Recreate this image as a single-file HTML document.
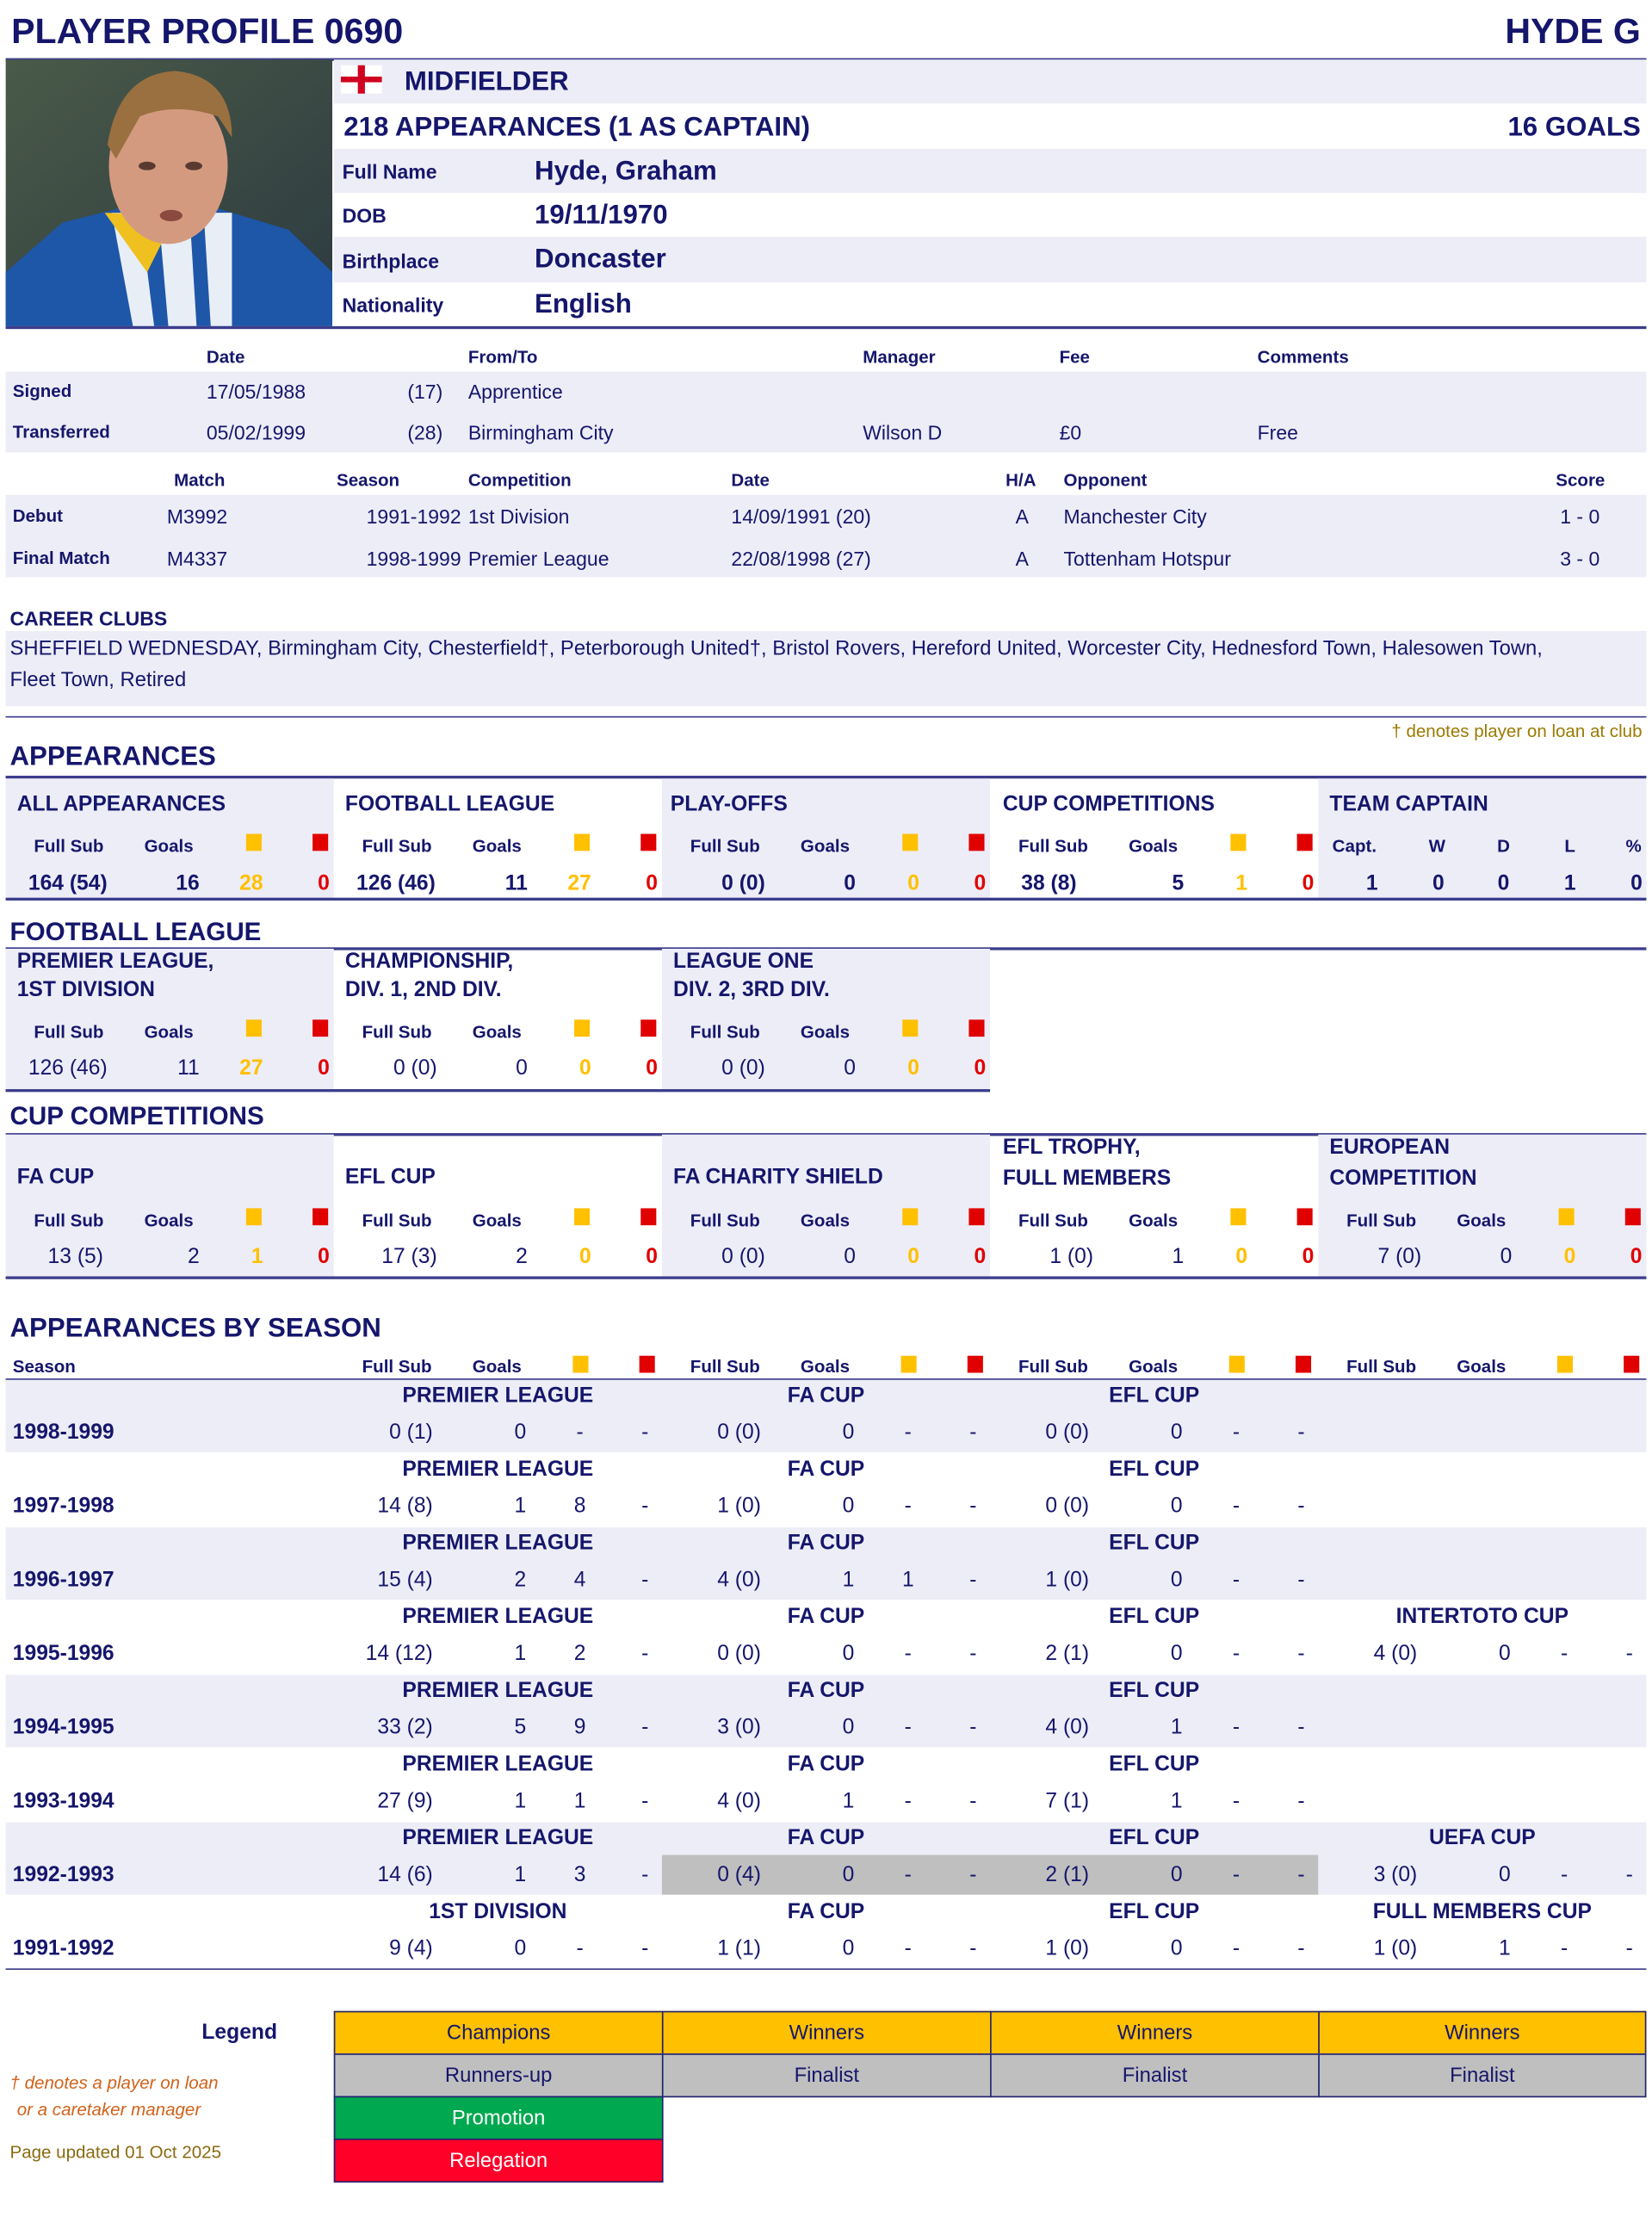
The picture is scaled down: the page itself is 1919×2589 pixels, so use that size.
<!DOCTYPE html>
<html><head><meta charset="utf-8">
<style>
html,body{margin:0;padding:0;background:#fff;}
body{width:1919px;height:2583px;overflow:hidden;}
#w{position:absolute;left:0;top:0;width:1168px;height:1572px;transform:scale(1.64298,1.6472);transform-origin:0 0;font-family:"Liberation Sans",Arial,sans-serif;color:#15166b;}
.a{position:absolute;white-space:nowrap;transform:translateY(-50%);line-height:1;font-size:14px;}
.r{transform:translate(-100%,-50%);}
.c{transform:translate(-50%,-50%);}
.b{font-weight:bold;}
.s{font-size:12.5px;font-weight:bold;}
.h{font-size:15px;font-weight:bold;}
.H{font-size:19px;font-weight:bold;}
.bx{position:absolute;}
.lv{background:#ededf7;}
.ln{position:absolute;left:4px;width:1160px;height:1.5px;background:#3c3c8c;}
.y{color:#ffc000;}.rd{color:#e00000;}
.sq{position:absolute;width:11px;height:12px;}
.sy{background:#ffc000;}.sr{background:#e00000;}
.lg{position:absolute;border:1px solid #23236e;box-sizing:border-box;display:flex;align-items:center;justify-content:center;font-size:14.5px;}
</style></head><body><div id="w">

<div class="a" style="left:8px;top:23px;font-size:25px;font-weight:bold">PLAYER PROFILE 0690</div>
<div class="a r" style="left:1160px;top:23px;font-size:25px;font-weight:bold">HYDE G</div>
<div class="ln" style="top:41px"></div>

<svg class="bx" style="left:4px;top:42px" width="231" height="188" viewBox="0 0 231 188">
<defs><linearGradient id="bg" x1="0" y1="0" x2="1" y2="1"><stop offset="0" stop-color="#4a5a48"/><stop offset="1" stop-color="#2c3a40"/></linearGradient></defs>
<rect width="231" height="188" fill="url(#bg)"/>
<path d="M0 150 L40 115 L80 105 L150 105 L200 120 L231 150 L231 188 L0 188Z" fill="#1e56a8"/>
<path d="M75 108 L90 188 L160 188 L160 108Z" fill="#e8eef5"/>
<path d="M95 108 L105 188 L115 188 L108 108Z" fill="#1e56a8"/>
<path d="M130 108 L135 188 L145 188 L140 108Z" fill="#1e56a8"/>
<path d="M70 108 L100 150 L120 110Z" fill="#f0c020"/>
<ellipse cx="115" cy="75" rx="42" ry="55" fill="#d49a80"/>
<path d="M72 60 Q80 10 120 8 Q160 12 160 55 L150 40 Q120 30 95 40 L78 70Z" fill="#9a7040"/>
<ellipse cx="100" cy="75" rx="6" ry="3" fill="#5a3a30"/><ellipse cx="133" cy="75" rx="6" ry="3" fill="#5a3a30"/>
<ellipse cx="117" cy="110" rx="8" ry="4" fill="#8a4a40"/>
</svg>

<div class="bx lv" style="left:236px;top:42px;width:928px;height:31px"></div>
<div class="bx lv" style="left:236px;top:105px;width:928px;height:31px"></div>
<div class="bx lv" style="left:236px;top:167px;width:928px;height:32px"></div>
<div class="bx" style="left:241px;top:46px;width:29px;height:20px;background:#fff"></div>
<div class="bx" style="left:253px;top:46px;width:5px;height:20px;background:#d00020"></div>
<div class="bx" style="left:241px;top:54px;width:29px;height:4px;background:#d00020"></div>
<div class="a H" style="left:286px;top:58px">MIDFIELDER</div>
<div class="a H" style="left:243px;top:90px">218 APPEARANCES (1 AS CAPTAIN)</div>
<div class="a H r" style="left:1160px;top:90px">16 GOALS</div>
<div class="a b" style="left:242px;top:121px;font-size:14px">Full Name</div><div class="a H" style="left:378px;top:121px">Hyde, Graham</div>
<div class="a b" style="left:242px;top:152px;font-size:14px">DOB</div><div class="a H" style="left:378px;top:152px">19/11/1970</div>
<div class="a b" style="left:242px;top:184px;font-size:14px">Birthplace</div><div class="a H" style="left:378px;top:183px">Doncaster</div>
<div class="a b" style="left:242px;top:215px;font-size:14px">Nationality</div><div class="a H" style="left:378px;top:215px">English</div>
<div class="ln" style="top:230px"></div>

<div class="a s" style="left:146px;top:252px">Date</div><div class="a s" style="left:331px;top:252px">From/To</div><div class="a s" style="left:610px;top:252px">Manager</div><div class="a s" style="left:749px;top:252px">Fee</div><div class="a s" style="left:889px;top:252px">Comments</div>
<div class="bx lv" style="left:4px;top:262px;width:1160px;height:57px"></div>
<div class="a s" style="left:9px;top:276px">Signed</div><div class="a" style="left:146px;top:276px">17/05/1988</div><div class="a r" style="left:313px;top:276px">(17)</div><div class="a" style="left:331px;top:276px">Apprentice</div>
<div class="a s" style="left:9px;top:305px">Transferred</div><div class="a" style="left:146px;top:305px">05/02/1999</div><div class="a r" style="left:313px;top:305px">(28)</div><div class="a" style="left:331px;top:305px">Birmingham City</div><div class="a" style="left:610px;top:305px">Wilson D</div><div class="a" style="left:749px;top:305px">£0</div><div class="a" style="left:889px;top:305px">Free</div>

<div class="a s" style="left:123px;top:339px">Match</div><div class="a s" style="left:238px;top:339px">Season</div><div class="a s" style="left:331px;top:339px">Competition</div><div class="a s" style="left:517px;top:339px">Date</div><div class="a s" style="left:711px;top:339px">H/A</div><div class="a s" style="left:752px;top:339px">Opponent</div><div class="a s" style="left:1100px;top:339px">Score</div>
<div class="bx lv" style="left:4px;top:349px;width:1160px;height:58px"></div>
<div class="a s" style="left:9px;top:364px">Debut</div><div class="a" style="left:118px;top:364px">M3992</div><div class="a r" style="left:326px;top:364px">1991-1992</div><div class="a" style="left:331px;top:364px">1st Division</div><div class="a" style="left:517px;top:364px">14/09/1991 (20)</div><div class="a" style="left:718px;top:364px">A</div><div class="a" style="left:752px;top:364px">Manchester City</div><div class="a" style="left:1103px;top:364px">1 - 0</div>
<div class="a s" style="left:9px;top:394px">Final Match</div><div class="a" style="left:118px;top:394px">M4337</div><div class="a r" style="left:326px;top:394px">1998-1999</div><div class="a" style="left:331px;top:394px">Premier League</div><div class="a" style="left:517px;top:394px">22/08/1998 (27)</div><div class="a" style="left:718px;top:394px">A</div><div class="a" style="left:752px;top:394px">Tottenham Hotspur</div><div class="a" style="left:1103px;top:394px">3 - 0</div>

<div class="a b" style="left:7px;top:436px;font-size:14px">CAREER CLUBS</div>
<div class="bx lv" style="left:4px;top:445px;width:1160px;height:53px"></div>
<div class="a" style="left:7px;top:458px;font-size:14.5px">SHEFFIELD WEDNESDAY, Birmingham City, Chesterfield†, Peterborough United†, Bristol Rovers, Hereford United, Worcester City, Hednesford Town, Halesowen Town,</div>
<div class="a" style="left:7px;top:480px;font-size:14.5px">Fleet Town, Retired</div>
<div class="ln" style="top:505px;height:1px"></div>
<div class="a r" style="left:1161px;top:516px;font-size:12.5px;color:#9a7a00">† denotes player on loan at club</div>

<div class="a" style="left:7px;top:534px;font-size:19px;font-weight:bold">APPEARANCES</div>
<div class="ln" style="top:547px;height:2px"></div>
<div class="bx lv" style="left:4px;top:549px;width:232px;height:84px"></div>
<div class="bx lv" style="left:468px;top:549px;width:232px;height:84px"></div>
<div class="bx lv" style="left:932px;top:549px;width:232px;height:84px"></div>
<div class="ln" style="top:633px"></div>

<div class="a h" style="left:12px;top:567px">ALL APPEARANCES</div>
<div class="a h" style="left:244px;top:567px">FOOTBALL LEAGUE</div>
<div class="a h" style="left:474px;top:567px">PLAY-OFFS</div>
<div class="a h" style="left:709px;top:567px">CUP COMPETITIONS</div>
<div class="a h" style="left:940px;top:567px">TEAM CAPTAIN</div>

<div class="a s" style="left:24px;top:597px">Full Sub</div><div class="a s" style="left:102px;top:597px">Goals</div><div class="sq sy" style="left:174px;top:588px"></div><div class="sq sr" style="left:221px;top:588px"></div>
<div class="a s" style="left:256px;top:597px">Full Sub</div><div class="a s" style="left:334px;top:597px">Goals</div><div class="sq sy" style="left:406px;top:588px"></div><div class="sq sr" style="left:453px;top:588px"></div>
<div class="a s" style="left:488px;top:597px">Full Sub</div><div class="a s" style="left:566px;top:597px">Goals</div><div class="sq sy" style="left:638px;top:588px"></div><div class="sq sr" style="left:685px;top:588px"></div>
<div class="a s" style="left:720px;top:597px">Full Sub</div><div class="a s" style="left:798px;top:597px">Goals</div><div class="sq sy" style="left:870px;top:588px"></div><div class="sq sr" style="left:917px;top:588px"></div>
<div class="a s" style="left:942px;top:597px">Capt.</div><div class="a s c" style="left:1016px;top:597px">W</div><div class="a s c" style="left:1063px;top:597px">D</div><div class="a s c" style="left:1110px;top:597px">L</div><div class="a s c" style="left:1155px;top:597px">%</div>

<div class="a b" style="left:20px;top:623px;font-size:15px">164 (54)</div><div class="a b r" style="left:141px;top:623px;font-size:15px">16</div><div class="a b r y" style="left:186px;top:623px;font-size:15px">28</div><div class="a b r rd" style="left:233px;top:623px;font-size:15px">0</div>
<div class="a b" style="left:252px;top:623px;font-size:15px">126 (46)</div><div class="a b r" style="left:373px;top:623px;font-size:15px">11</div><div class="a b r y" style="left:418px;top:623px;font-size:15px">27</div><div class="a b r rd" style="left:465px;top:623px;font-size:15px">0</div>
<div class="a b r" style="left:541px;top:623px;font-size:15px">0 (0)</div><div class="a b r" style="left:605px;top:623px;font-size:15px">0</div><div class="a b r y" style="left:650px;top:623px;font-size:15px">0</div><div class="a b r rd" style="left:697px;top:623px;font-size:15px">0</div>
<div class="a b" style="left:722px;top:623px;font-size:15px">38 (8)</div><div class="a b r" style="left:837px;top:623px;font-size:15px">5</div><div class="a b r y" style="left:882px;top:623px;font-size:15px">1</div><div class="a b r rd" style="left:929px;top:623px;font-size:15px">0</div>
<div class="a b c" style="left:970px;top:623px;font-size:15px">1</div><div class="a b c" style="left:1017px;top:623px;font-size:15px">0</div><div class="a b c" style="left:1063px;top:623px;font-size:15px">0</div><div class="a b c" style="left:1110px;top:623px;font-size:15px">1</div><div class="a b c" style="left:1157px;top:623px;font-size:15px">0</div>

<div class="a" style="left:7px;top:657px;font-size:18px;font-weight:bold">FOOTBALL LEAGUE</div>
<div class="ln" style="top:668px"></div>
<div class="bx lv" style="left:4px;top:669px;width:232px;height:99px"></div>
<div class="bx lv" style="left:468px;top:669px;width:232px;height:99px"></div>
<div class="bx" style="left:4px;top:768px;width:696px;height:1.5px;background:#3c3c8c"></div>
<div class="a h" style="left:12px;top:678px">PREMIER LEAGUE,</div><div class="a h" style="left:12px;top:698px">1ST DIVISION</div>
<div class="a h" style="left:244px;top:678px">CHAMPIONSHIP,</div><div class="a h" style="left:244px;top:698px">DIV. 1, 2ND DIV.</div>
<div class="a h" style="left:476px;top:678px">LEAGUE ONE</div><div class="a h" style="left:476px;top:698px">DIV. 2, 3RD DIV.</div>
<div class="a s" style="left:24px;top:728px">Full Sub</div><div class="a s" style="left:102px;top:728px">Goals</div><div class="sq sy" style="left:174px;top:719px"></div><div class="sq sr" style="left:221px;top:719px"></div>
<div class="a s" style="left:256px;top:728px">Full Sub</div><div class="a s" style="left:334px;top:728px">Goals</div><div class="sq sy" style="left:406px;top:719px"></div><div class="sq sr" style="left:453px;top:719px"></div>
<div class="a s" style="left:488px;top:728px">Full Sub</div><div class="a s" style="left:566px;top:728px">Goals</div><div class="sq sy" style="left:638px;top:719px"></div><div class="sq sr" style="left:685px;top:719px"></div>
<div class="a" style="left:20px;top:753px;font-size:15px">126 (46)</div><div class="a r" style="left:141px;top:753px;font-size:15px">11</div><div class="a b r y" style="left:186px;top:753px;font-size:15px">27</div><div class="a b r rd" style="left:233px;top:753px;font-size:15px">0</div>
<div class="a r" style="left:309px;top:753px;font-size:15px">0 (0)</div><div class="a r" style="left:373px;top:753px;font-size:15px">0</div><div class="a b r y" style="left:418px;top:753px;font-size:15px">0</div><div class="a b r rd" style="left:465px;top:753px;font-size:15px">0</div>
<div class="a r" style="left:541px;top:753px;font-size:15px">0 (0)</div><div class="a r" style="left:605px;top:753px;font-size:15px">0</div><div class="a b r y" style="left:650px;top:753px;font-size:15px">0</div><div class="a b r rd" style="left:697px;top:753px;font-size:15px">0</div>

<div class="a" style="left:7px;top:787px;font-size:18px;font-weight:bold">CUP COMPETITIONS</div>
<div class="ln" style="top:799px"></div>
<div class="bx lv" style="left:4px;top:800px;width:232px;height:100px"></div>
<div class="bx lv" style="left:468px;top:800px;width:232px;height:100px"></div>
<div class="bx lv" style="left:932px;top:800px;width:232px;height:100px"></div>
<div class="ln" style="top:900px"></div>
<div class="a h" style="left:12px;top:830px">FA CUP</div>
<div class="a h" style="left:244px;top:830px">EFL CUP</div>
<div class="a h" style="left:476px;top:830px">FA CHARITY SHIELD</div>
<div class="a h" style="left:709px;top:809px">EFL TROPHY,</div><div class="a h" style="left:709px;top:831px">FULL MEMBERS</div>
<div class="a h" style="left:940px;top:809px">EUROPEAN</div><div class="a h" style="left:940px;top:831px">COMPETITION</div>
<div class="a s" style="left:24px;top:861px">Full Sub</div><div class="a s" style="left:102px;top:861px">Goals</div><div class="sq sy" style="left:174px;top:852px"></div><div class="sq sr" style="left:221px;top:852px"></div>
<div class="a s" style="left:256px;top:861px">Full Sub</div><div class="a s" style="left:334px;top:861px">Goals</div><div class="sq sy" style="left:406px;top:852px"></div><div class="sq sr" style="left:453px;top:852px"></div>
<div class="a s" style="left:488px;top:861px">Full Sub</div><div class="a s" style="left:566px;top:861px">Goals</div><div class="sq sy" style="left:638px;top:852px"></div><div class="sq sr" style="left:685px;top:852px"></div>
<div class="a s" style="left:720px;top:861px">Full Sub</div><div class="a s" style="left:798px;top:861px">Goals</div><div class="sq sy" style="left:870px;top:852px"></div><div class="sq sr" style="left:917px;top:852px"></div>
<div class="a s" style="left:952px;top:861px">Full Sub</div><div class="a s" style="left:1030px;top:861px">Goals</div><div class="sq sy" style="left:1102px;top:852px"></div><div class="sq sr" style="left:1149px;top:852px"></div>
<div class="a r" style="left:73px;top:886px;font-size:15px">13 (5)</div><div class="a r" style="left:141px;top:886px;font-size:15px">2</div><div class="a b r y" style="left:186px;top:886px;font-size:15px">1</div><div class="a b r rd" style="left:233px;top:886px;font-size:15px">0</div>
<div class="a r" style="left:309px;top:886px;font-size:15px">17 (3)</div><div class="a r" style="left:373px;top:886px;font-size:15px">2</div><div class="a b r y" style="left:418px;top:886px;font-size:15px">0</div><div class="a b r rd" style="left:465px;top:886px;font-size:15px">0</div>
<div class="a r" style="left:541px;top:886px;font-size:15px">0 (0)</div><div class="a r" style="left:605px;top:886px;font-size:15px">0</div><div class="a b r y" style="left:650px;top:886px;font-size:15px">0</div><div class="a b r rd" style="left:697px;top:886px;font-size:15px">0</div>
<div class="a r" style="left:773px;top:886px;font-size:15px">1 (0)</div><div class="a r" style="left:837px;top:886px;font-size:15px">1</div><div class="a b r y" style="left:882px;top:886px;font-size:15px">0</div><div class="a b r rd" style="left:929px;top:886px;font-size:15px">0</div>
<div class="a r" style="left:1005px;top:886px;font-size:15px">7 (0)</div><div class="a r" style="left:1069px;top:886px;font-size:15px">0</div><div class="a b r y" style="left:1114px;top:886px;font-size:15px">0</div><div class="a b r rd" style="left:1161px;top:886px;font-size:15px">0</div>

<div class="a" style="left:7px;top:937px;font-size:19px;font-weight:bold">APPEARANCES BY SEASON</div>
<div class="a s" style="left:9px;top:964px">Season</div>
<div class="a s" style="left:256px;top:964px">Full Sub</div><div class="a s" style="left:334px;top:964px">Goals</div><div class="sq sy" style="left:405px;top:956px"></div><div class="sq sr" style="left:452px;top:956px"></div>
<div class="a s" style="left:488px;top:964px">Full Sub</div><div class="a s" style="left:566px;top:964px">Goals</div><div class="sq sy" style="left:637px;top:956px"></div><div class="sq sr" style="left:684px;top:956px"></div>
<div class="a s" style="left:720px;top:964px">Full Sub</div><div class="a s" style="left:798px;top:964px">Goals</div><div class="sq sy" style="left:869px;top:956px"></div><div class="sq sr" style="left:916px;top:956px"></div>
<div class="a s" style="left:952px;top:964px">Full Sub</div><div class="a s" style="left:1030px;top:964px">Goals</div><div class="sq sy" style="left:1101px;top:956px"></div><div class="sq sr" style="left:1148px;top:956px"></div>
<div class="ln" style="top:972px"></div>
<div class="bx lv" style="left:4px;top:973px;width:1160px;height:51px"></div>
<div class="bx lv" style="left:4px;top:1077px;width:1160px;height:51px"></div>
<div class="bx lv" style="left:4px;top:1181px;width:1160px;height:51px"></div>
<div class="bx lv" style="left:4px;top:1285px;width:1160px;height:51px"></div>
<div class="bx" style="left:468px;top:1308px;width:464px;height:28px;background:#bfbfbf"></div>
<div class="ln" style="top:1388px;height:1px"></div>

<div class="a h c" style="left:352px;top:984px">PREMIER LEAGUE</div><div class="a h c" style="left:584px;top:984px">FA CUP</div><div class="a h c" style="left:816px;top:984px">EFL CUP</div>
<div class="a h" style="left:9px;top:1010px">1998-1999</div>
<div class="a r" style="left:306px;top:1010px;font-size:15px">0 (1)</div><div class="a r" style="left:372px;top:1010px;font-size:15px">0</div><div class="a c" style="left:410px;top:1010px;font-size:15px">-</div><div class="a c" style="left:456px;top:1010px;font-size:15px">-</div>
<div class="a r" style="left:538px;top:1010px;font-size:15px">0 (0)</div><div class="a r" style="left:604px;top:1010px;font-size:15px">0</div><div class="a c" style="left:642px;top:1010px;font-size:15px">-</div><div class="a c" style="left:688px;top:1010px;font-size:15px">-</div>
<div class="a r" style="left:770px;top:1010px;font-size:15px">0 (0)</div><div class="a r" style="left:836px;top:1010px;font-size:15px">0</div><div class="a c" style="left:874px;top:1010px;font-size:15px">-</div><div class="a c" style="left:920px;top:1010px;font-size:15px">-</div>

<div class="a h c" style="left:352px;top:1036px">PREMIER LEAGUE</div><div class="a h c" style="left:584px;top:1036px">FA CUP</div><div class="a h c" style="left:816px;top:1036px">EFL CUP</div>
<div class="a h" style="left:9px;top:1062px">1997-1998</div>
<div class="a r" style="left:306px;top:1062px;font-size:15px">14 (8)</div><div class="a r" style="left:372px;top:1062px;font-size:15px">1</div><div class="a c" style="left:410px;top:1062px;font-size:15px">8</div><div class="a c" style="left:456px;top:1062px;font-size:15px">-</div>
<div class="a r" style="left:538px;top:1062px;font-size:15px">1 (0)</div><div class="a r" style="left:604px;top:1062px;font-size:15px">0</div><div class="a c" style="left:642px;top:1062px;font-size:15px">-</div><div class="a c" style="left:688px;top:1062px;font-size:15px">-</div>
<div class="a r" style="left:770px;top:1062px;font-size:15px">0 (0)</div><div class="a r" style="left:836px;top:1062px;font-size:15px">0</div><div class="a c" style="left:874px;top:1062px;font-size:15px">-</div><div class="a c" style="left:920px;top:1062px;font-size:15px">-</div>

<div class="a h c" style="left:352px;top:1088px">PREMIER LEAGUE</div><div class="a h c" style="left:584px;top:1088px">FA CUP</div><div class="a h c" style="left:816px;top:1088px">EFL CUP</div>
<div class="a h" style="left:9px;top:1114px">1996-1997</div>
<div class="a r" style="left:306px;top:1114px;font-size:15px">15 (4)</div><div class="a r" style="left:372px;top:1114px;font-size:15px">2</div><div class="a c" style="left:410px;top:1114px;font-size:15px">4</div><div class="a c" style="left:456px;top:1114px;font-size:15px">-</div>
<div class="a r" style="left:538px;top:1114px;font-size:15px">4 (0)</div><div class="a r" style="left:604px;top:1114px;font-size:15px">1</div><div class="a c" style="left:642px;top:1114px;font-size:15px">1</div><div class="a c" style="left:688px;top:1114px;font-size:15px">-</div>
<div class="a r" style="left:770px;top:1114px;font-size:15px">1 (0)</div><div class="a r" style="left:836px;top:1114px;font-size:15px">0</div><div class="a c" style="left:874px;top:1114px;font-size:15px">-</div><div class="a c" style="left:920px;top:1114px;font-size:15px">-</div>

<div class="a h c" style="left:352px;top:1140px">PREMIER LEAGUE</div><div class="a h c" style="left:584px;top:1140px">FA CUP</div><div class="a h c" style="left:816px;top:1140px">EFL CUP</div><div class="a h c" style="left:1048px;top:1140px">INTERTOTO CUP</div>
<div class="a h" style="left:9px;top:1166px">1995-1996</div>
<div class="a r" style="left:306px;top:1166px;font-size:15px">14 (12)</div><div class="a r" style="left:372px;top:1166px;font-size:15px">1</div><div class="a c" style="left:410px;top:1166px;font-size:15px">2</div><div class="a c" style="left:456px;top:1166px;font-size:15px">-</div>
<div class="a r" style="left:538px;top:1166px;font-size:15px">0 (0)</div><div class="a r" style="left:604px;top:1166px;font-size:15px">0</div><div class="a c" style="left:642px;top:1166px;font-size:15px">-</div><div class="a c" style="left:688px;top:1166px;font-size:15px">-</div>
<div class="a r" style="left:770px;top:1166px;font-size:15px">2 (1)</div><div class="a r" style="left:836px;top:1166px;font-size:15px">0</div><div class="a c" style="left:874px;top:1166px;font-size:15px">-</div><div class="a c" style="left:920px;top:1166px;font-size:15px">-</div>
<div class="a r" style="left:1002px;top:1166px;font-size:15px">4 (0)</div><div class="a r" style="left:1068px;top:1166px;font-size:15px">0</div><div class="a c" style="left:1106px;top:1166px;font-size:15px">-</div><div class="a c" style="left:1152px;top:1166px;font-size:15px">-</div>

<div class="a h c" style="left:352px;top:1192px">PREMIER LEAGUE</div><div class="a h c" style="left:584px;top:1192px">FA CUP</div><div class="a h c" style="left:816px;top:1192px">EFL CUP</div>
<div class="a h" style="left:9px;top:1218px">1994-1995</div>
<div class="a r" style="left:306px;top:1218px;font-size:15px">33 (2)</div><div class="a r" style="left:372px;top:1218px;font-size:15px">5</div><div class="a c" style="left:410px;top:1218px;font-size:15px">9</div><div class="a c" style="left:456px;top:1218px;font-size:15px">-</div>
<div class="a r" style="left:538px;top:1218px;font-size:15px">3 (0)</div><div class="a r" style="left:604px;top:1218px;font-size:15px">0</div><div class="a c" style="left:642px;top:1218px;font-size:15px">-</div><div class="a c" style="left:688px;top:1218px;font-size:15px">-</div>
<div class="a r" style="left:770px;top:1218px;font-size:15px">4 (0)</div><div class="a r" style="left:836px;top:1218px;font-size:15px">1</div><div class="a c" style="left:874px;top:1218px;font-size:15px">-</div><div class="a c" style="left:920px;top:1218px;font-size:15px">-</div>

<div class="a h c" style="left:352px;top:1244px">PREMIER LEAGUE</div><div class="a h c" style="left:584px;top:1244px">FA CUP</div><div class="a h c" style="left:816px;top:1244px">EFL CUP</div>
<div class="a h" style="left:9px;top:1270px">1993-1994</div>
<div class="a r" style="left:306px;top:1270px;font-size:15px">27 (9)</div><div class="a r" style="left:372px;top:1270px;font-size:15px">1</div><div class="a c" style="left:410px;top:1270px;font-size:15px">1</div><div class="a c" style="left:456px;top:1270px;font-size:15px">-</div>
<div class="a r" style="left:538px;top:1270px;font-size:15px">4 (0)</div><div class="a r" style="left:604px;top:1270px;font-size:15px">1</div><div class="a c" style="left:642px;top:1270px;font-size:15px">-</div><div class="a c" style="left:688px;top:1270px;font-size:15px">-</div>
<div class="a r" style="left:770px;top:1270px;font-size:15px">7 (1)</div><div class="a r" style="left:836px;top:1270px;font-size:15px">1</div><div class="a c" style="left:874px;top:1270px;font-size:15px">-</div><div class="a c" style="left:920px;top:1270px;font-size:15px">-</div>

<div class="a h c" style="left:352px;top:1296px">PREMIER LEAGUE</div><div class="a h c" style="left:584px;top:1296px">FA CUP</div><div class="a h c" style="left:816px;top:1296px">EFL CUP</div><div class="a h c" style="left:1048px;top:1296px">UEFA CUP</div>
<div class="a h" style="left:9px;top:1322px">1992-1993</div>
<div class="a r" style="left:306px;top:1322px;font-size:15px">14 (6)</div><div class="a r" style="left:372px;top:1322px;font-size:15px">1</div><div class="a c" style="left:410px;top:1322px;font-size:15px">3</div><div class="a c" style="left:456px;top:1322px;font-size:15px">-</div>
<div class="a r" style="left:538px;top:1322px;font-size:15px">0 (4)</div><div class="a r" style="left:604px;top:1322px;font-size:15px">0</div><div class="a c" style="left:642px;top:1322px;font-size:15px">-</div><div class="a c" style="left:688px;top:1322px;font-size:15px">-</div>
<div class="a r" style="left:770px;top:1322px;font-size:15px">2 (1)</div><div class="a r" style="left:836px;top:1322px;font-size:15px">0</div><div class="a c" style="left:874px;top:1322px;font-size:15px">-</div><div class="a c" style="left:920px;top:1322px;font-size:15px">-</div>
<div class="a r" style="left:1002px;top:1322px;font-size:15px">3 (0)</div><div class="a r" style="left:1068px;top:1322px;font-size:15px">0</div><div class="a c" style="left:1106px;top:1322px;font-size:15px">-</div><div class="a c" style="left:1152px;top:1322px;font-size:15px">-</div>

<div class="a h c" style="left:352px;top:1348px">1ST DIVISION</div><div class="a h c" style="left:584px;top:1348px">FA CUP</div><div class="a h c" style="left:816px;top:1348px">EFL CUP</div><div class="a h c" style="left:1048px;top:1348px">FULL MEMBERS CUP</div>
<div class="a h" style="left:9px;top:1374px">1991-1992</div>
<div class="a r" style="left:306px;top:1374px;font-size:15px">9 (4)</div><div class="a r" style="left:372px;top:1374px;font-size:15px">0</div><div class="a c" style="left:410px;top:1374px;font-size:15px">-</div><div class="a c" style="left:456px;top:1374px;font-size:15px">-</div>
<div class="a r" style="left:538px;top:1374px;font-size:15px">1 (1)</div><div class="a r" style="left:604px;top:1374px;font-size:15px">0</div><div class="a c" style="left:642px;top:1374px;font-size:15px">-</div><div class="a c" style="left:688px;top:1374px;font-size:15px">-</div>
<div class="a r" style="left:770px;top:1374px;font-size:15px">1 (0)</div><div class="a r" style="left:836px;top:1374px;font-size:15px">0</div><div class="a c" style="left:874px;top:1374px;font-size:15px">-</div><div class="a c" style="left:920px;top:1374px;font-size:15px">-</div>
<div class="a r" style="left:1002px;top:1374px;font-size:15px">1 (0)</div><div class="a r" style="left:1068px;top:1374px;font-size:15px">1</div><div class="a c" style="left:1106px;top:1374px;font-size:15px">-</div><div class="a c" style="left:1152px;top:1374px;font-size:15px">-</div>

<div class="a h r" style="left:196px;top:1433px">Legend</div>
<div class="a" style="left:7px;top:1469px;font-size:12.5px;font-style:italic;color:#d0621a">† denotes a player on loan</div>
<div class="a" style="left:12px;top:1488px;font-size:12.5px;font-style:italic;color:#d0621a">or a caretaker manager</div>
<div class="a" style="left:7px;top:1518px;font-size:12.5px;color:#8a6a10">Page updated 01 Oct 2025</div>
<div class="lg" style="left:236px;top:1418px;width:233px;height:31px;background:#ffc000">Champions</div>
<div class="lg" style="left:468px;top:1418px;width:233px;height:31px;background:#ffc000">Winners</div>
<div class="lg" style="left:700px;top:1418px;width:233px;height:31px;background:#ffc000">Winners</div>
<div class="lg" style="left:932px;top:1418px;width:232px;height:31px;background:#ffc000">Winners</div>
<div class="lg" style="left:236px;top:1448px;width:233px;height:31px;background:#bfbfbf">Runners-up</div>
<div class="lg" style="left:468px;top:1448px;width:233px;height:31px;background:#bfbfbf">Finalist</div>
<div class="lg" style="left:700px;top:1448px;width:233px;height:31px;background:#bfbfbf">Finalist</div>
<div class="lg" style="left:932px;top:1448px;width:232px;height:31px;background:#bfbfbf">Finalist</div>
<div class="lg" style="left:236px;top:1478px;width:233px;height:31px;background:#00a84f;color:#fff">Promotion</div>
<div class="lg" style="left:236px;top:1508px;width:233px;height:31px;background:#ff0029;color:#fff">Relegation</div>

</div></body></html>
